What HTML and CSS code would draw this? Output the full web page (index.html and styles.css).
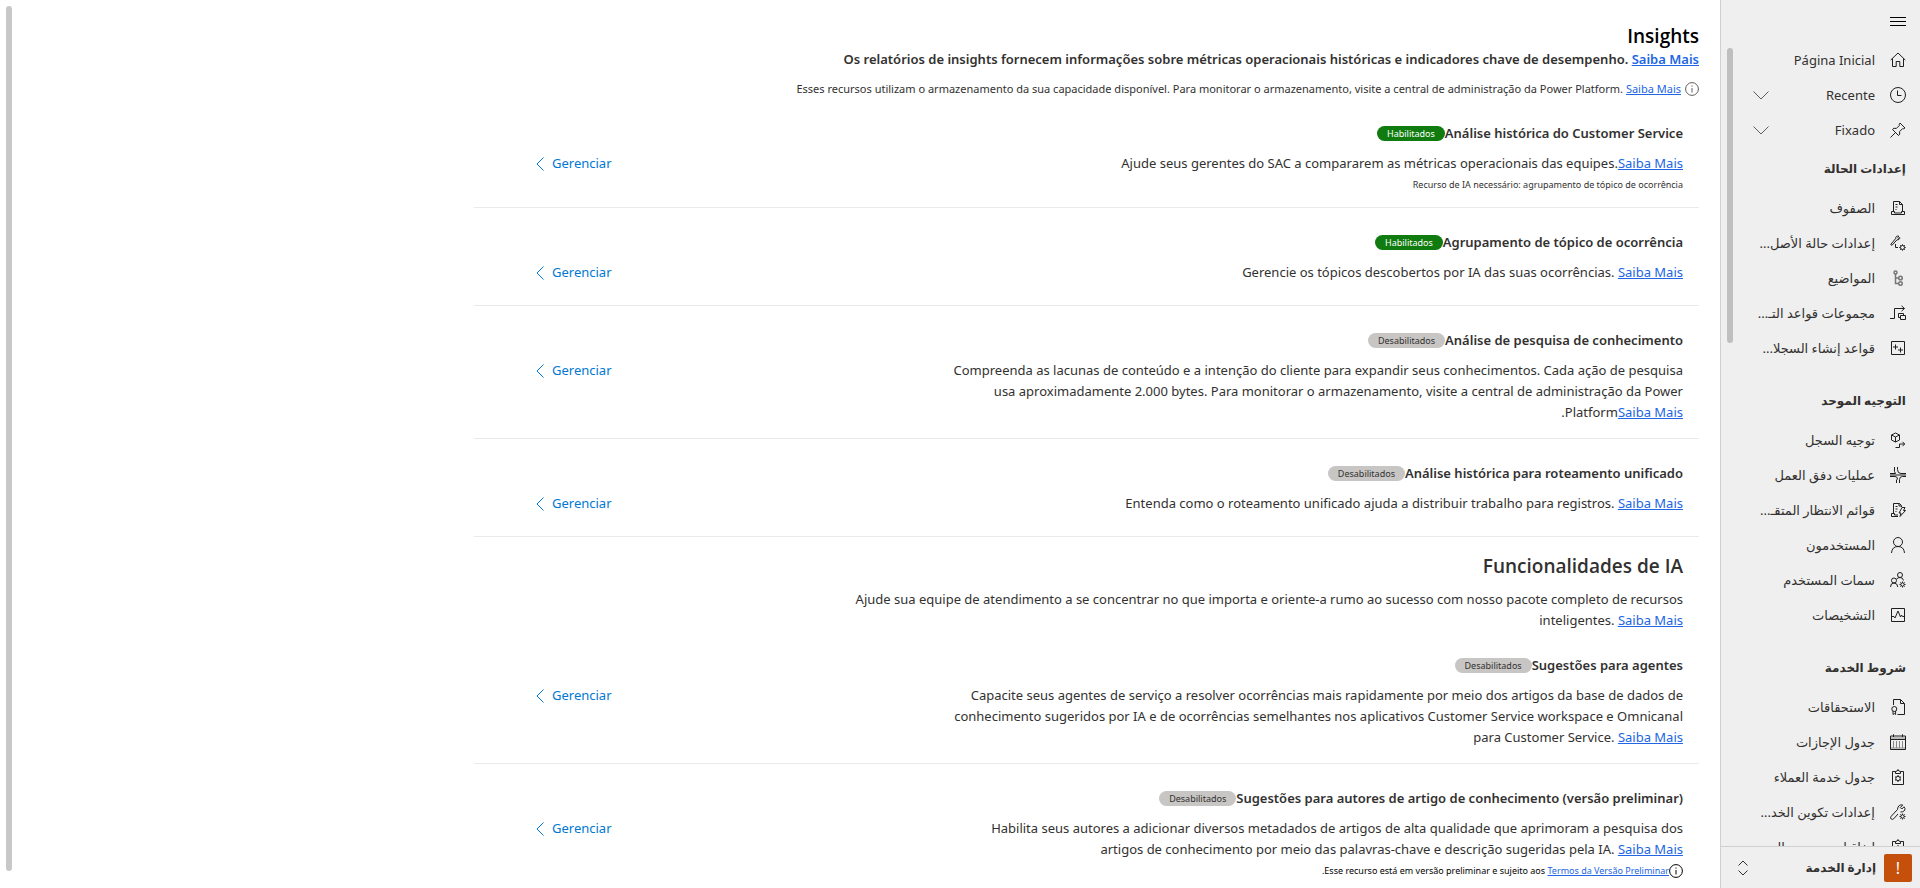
FILE: index.html
```html
<!DOCTYPE html>
<html lang="pt-BR" dir="rtl">
<head>
<meta charset="utf-8">
<title>Insights</title>
<link rel="stylesheet" href="styles.css">
</head>
<body>
<svg class="sprite" aria-hidden="true">
  <symbol id="i-home" viewBox="0 0 16 16"><path d="M.7 8 8 1l7.300 7M2.500 6.500v8h3.700v-5h3.600v5h3.700v-8"/></symbol>
  <symbol id="i-clock" viewBox="0 0 16 16"><circle cx="8" cy="8" r="7.500"/><path d="M7.500 3.500v5h4"/></symbol>
  <symbol id="i-pin" viewBox="0 0 16 16"><path d="m10 1 5 5-1.500.8-.8-.3L9.500 9.700l.3 2.300-1.300 1.500-6-6L4 6.200l2.300.3L9.500 3.300 9.200 2.500zM5.500 10.500.5 15.500"/></symbol>
  <symbol id="i-queue" viewBox="0 0 16 16"><path d="M3.500 11V1.500h6l3 3V11M9.500 1.500v3h3M1.500 11.500h3v1.500h7v-1.500h3v3h-13zM5.500 4.500h2M5.500 7h2M5.500 9.500h1"/></symbol>
  <symbol id="i-casecfg" viewBox="0 0 16 16"><path d="m.7 9.500 5-6C5.500 1.500 7 .5 9 1.300L7.700 2.600 8.500 3.500l1.200-1C10.200 4 8.500 5 7 4.800L2 10.300zM5.500 9v3.500H8"/><circle cx="12.500" cy="12.500" r="2"/><path d="M12.500 9.300v1.200M12.500 14.500v1.200M9.300 12.500h1.200M14.500 12.500h1.200M10.200 10.200l.9.9M13.900 13.900l.9.9M14.800 10.200l-.9.9M11.100 13.900l-.9.9"/></symbol>
  <symbol id="i-tree" viewBox="0 0 16 16"><g stroke="#777" stroke-width="1.500"><circle cx="5.500" cy="2.500" r="1.500"/><circle cx="10.500" cy="8" r="1.800"/><circle cx="10.500" cy="13.500" r="1.800"/><path d="M5.500 4v9.500h3M5.500 8h3"/></g></symbol>
  <symbol id="i-rules" viewBox="0 0 16 16"><path d="M0 13.500h4.500v-10h10M11.500.8l3 2.700-3 2.700M10.500 10.500h5v4h-5zM10.500 12.500h-2v-4h5v2"/></symbol>
  <symbol id="i-records" viewBox="0 0 16 16"><path d="M1.500 1.500h13v13h-13zM5.500 4.500v5M3 7h5M10.500 7.500v5M8 10h5"/></symbol>
  <symbol id="i-routing" viewBox="0 0 16 16"><path d="m5.500 1 4 2v5l-4 2-4-2V3zM1.500 3l4 2 4-2M5.500 5v5M5.500 15.500h4v-3.500h5M12.500 9.800l2.200 2.200-2.200 2.200"/></symbol>
  <symbol id="i-flows" viewBox="0 0 16 16"><path d="M0 6.500h5.500l-1-2V0M0 9.500h5q2.500 0 2.500 2.500l-1 1v3M7.500 0v2.500q0 4 3.500 4h5M9.500 16v-3.500q0-3 3-3H16M0 8h16"/></symbol>
  <symbol id="i-overflow" viewBox="0 0 16 16"><path d="M3.500 11V1.500h6l2 2V5M9 1.500V4h2.500M1.500 11.500h3v1.500H8M1.500 11.500v3H8M5.500 4.500h2M5.500 7h2M5.500 9.500h1M12 5.500h3l-1.500 3h2L10 14.500l1-3.500H9z"/></symbol>
  <symbol id="i-user" viewBox="0 0 16 16"><circle cx="8" cy="5" r="4.500"/><path d="M1.500 16q.5-6.500 6.500-6.500T14.500 16"/></symbol>
  <symbol id="i-attrs" viewBox="0 0 16 16"><circle cx="10" cy="3" r="2.500"/><circle cx="4" cy="8.500" r="2.500"/><path d="M.5 15q0-4 3.500-4t3.800 4M6.500 7q1.500-1.500 3.500-1.500 3 0 3.500 3"/><circle cx="12.500" cy="12.500" r="1.700"/><path d="M12.500 9.500v1.300M12.500 14.200v1.300M9.500 12.500h1.300M14.200 12.500h1.300M10.400 10.400l.9.900M13.700 13.700l.9.900M14.600 10.400l-.9.900M11.300 13.700l-.9.900"/></symbol>
  <symbol id="i-pulse" viewBox="0 0 16 16"><path d="M1.500 1.500h13v13h-13zM1.500 9.500H4l1 1.500 3-7 2.500 6 1-2 1 1.500h2"/></symbol>
  <symbol id="i-entitle" viewBox="0 0 16 16"><path d="M3.500 6V.5h7l4 4v11H7.500M10.500.5v4h4"/><circle cx="4.300" cy="10" r="2.500"/><path d="M3 12v3.500l1.300-1 1.300 1V12"/></symbol>
  <symbol id="i-calendar" viewBox="0 0 16 16"><path stroke="#888" d="M.5 4h15M.5 14h15M3.500 7v7M6.500 7v7M9.500 7v7M12.500 7v7"/><path d="M.5 2h15v13.500H.5zM.5 5.500h15M3.500.3V3M12.500.3V3"/></symbol>
  <symbol id="i-clip" viewBox="0 0 16 16"><path d="M5.500 2.500H2.500v13h11v-13h-3M5.500 4.500v-2q2 0 2.500-2 .5 2 2.500 2v2z"/><circle cx="8" cy="9.500" r="2.200"/><path d="M8 6v1.300M8 11.700V13M5 7.700l1.100.7M9.900 10.600l1.100.7M11 7.700l-1.100.7M6.100 10.600l-1.100.7"/></symbol>
  <symbol id="i-wrench" viewBox="0 0 16 16"><path d="M15 4.500q0 3.500-4.500 3.500M15 4.500 14 2.800 11.800 5 10.300 3.500 12.800 1Q8 0 7.500 5.500l-6.500 7q-1 1.500.2 2.500t2.600-.3L8 10"/><circle cx="12.500" cy="12.500" r="1.700"/><path d="M12.500 9.500v1.300M12.500 14.200v1.300M9.500 12.500h1.300M14.200 12.500h1.300M10.400 10.400l.9.900M13.700 13.700l.9.900M14.600 10.400l-.9.900M11.300 13.700l-.9.900"/></symbol>
  <symbol id="i-down" viewBox="0 0 16 16"><path d="m.5 4.500 7.500 7.500 7.500-7.500"/></symbol>
  <symbol id="i-left" viewBox="0 0 8 14"><path d="M7.500.5 1 7l6.500 6.500"/></symbol>
  <symbol id="i-info" viewBox="0 0 14 14"><circle cx="7" cy="7" r="6.400"/><path d="M7 6v4.500M7 3.500v1.200"/></symbol>
</svg>
<div class="app">
  <aside class="sidebar">
    <button class="menu" type="button" aria-label="Menu"><svg viewBox="0 0 16 9"><path d="M0 .5h16M0 4.500h16M0 8.500h16"/></svg></button>
    <nav class="nav">
      <a class="item" href="#"><svg><use href="#i-home"/></svg><span>Página Inicial</span></a>
      <button class="item" type="button"><svg><use href="#i-clock"/></svg><span>Recente</span><svg class="chev"><use href="#i-down"/></svg></button>
      <button class="item" type="button"><svg><use href="#i-pin"/></svg><span>Fixado</span><svg class="chev"><use href="#i-down"/></svg></button>
      <h2 class="group first">إعدادات الحالة</h2>
      <a class="item" href="#"><svg><use href="#i-queue"/></svg><span>الصفوف</span></a>
      <a class="item" href="#"><svg><use href="#i-casecfg"/></svg><span>إعدادات حالة الأصل...</span></a>
      <a class="item" href="#"><svg><use href="#i-tree"/></svg><span>المواضيع</span></a>
      <a class="item" href="#"><svg><use href="#i-rules"/></svg><span>مجموعات قواعد التـ...</span></a>
      <a class="item" href="#"><svg><use href="#i-records"/></svg><span>قواعد إنشاء السجلا...</span></a>
      <h2 class="group">التوجيه الموحد</h2>
      <a class="item" href="#"><svg><use href="#i-routing"/></svg><span>توجيه السجل</span></a>
      <a class="item" href="#"><svg><use href="#i-flows"/></svg><span>عمليات دفق العمل</span></a>
      <a class="item" href="#"><svg><use href="#i-overflow"/></svg><span>قوائم الانتظار المتقـ...</span></a>
      <a class="item" href="#"><svg><use href="#i-user"/></svg><span>المستخدمون</span></a>
      <a class="item" href="#"><svg><use href="#i-attrs"/></svg><span>سمات المستخدم</span></a>
      <a class="item" href="#"><svg><use href="#i-pulse"/></svg><span>التشخيصات</span></a>
      <h2 class="group">شروط الخدمة</h2>
      <a class="item" href="#"><svg><use href="#i-entitle"/></svg><span>الاستحقاقات</span></a>
      <a class="item" href="#"><svg><use href="#i-calendar"/></svg><span>جدول الإجازات</span></a>
      <a class="item" href="#"><svg><use href="#i-clip"/></svg><span>جدول خدمة العملاء</span></a>
      <a class="item" href="#"><svg><use href="#i-wrench"/></svg><span>إعدادات تكوين الخد...</span></a>
      <a class="item" href="#"><svg><use href="#i-clip"/></svg><span>اتفاقيات مستوى ال...</span></a>
      <div class="thumb nav-thumb"></div>
    </nav>
    <button class="area" type="button">
      <span class="area-badge">!</span><span class="area-name">إدارة الخدمة</span>
      <svg class="updown" viewBox="0 0 10 16"><path d="M.5 5.500 5 1l4.500 4.500M.5 10.500 5 15l4.500-4.500"/></svg>
    </button>
  </aside>
  <main class="main">
    <div class="thumb main-thumb"></div>
    <div class="content">
      <h1 class="title">Insights</h1>
      <p class="subtitle">Os relatórios de insights fornecem informações sobre métricas operacionais históricas e indicadores chave de desempenho. <a href="#">Saiba Mais</a></p>
      <p class="note"><svg class="info"><use href="#i-info"/></svg><span>Esses recursos utilizam o armazenamento da sua capacidade disponível. Para monitorar o armazenamento, visite a central de administração da Power Platform. <a href="#">Saiba Mais</a></span></p>

      <section class="card">
        <h3 class="name"><bdi>Análise histórica do Customer Service</bdi><span class="badge on">Habilitados</span></h3>
        <div class="row"><p class="desc">Ajude seus gerentes do SAC a compararem as métricas operacionais das equipes.<a href="#">Saiba Mais</a></p>
        <a class="manage" href="#"><span>Gerenciar</span><svg><use href="#i-left"/></svg></a></div>
        <p class="fine">Recurso de IA necessário: agrupamento de tópico de ocorrência</p>
      </section>
      <section class="card">
        <h3 class="name"><bdi>Agrupamento de tópico de ocorrência</bdi><span class="badge on">Habilitados</span></h3>
        <div class="row"><p class="desc">Gerencie os tópicos descobertos por IA das suas ocorrências. <a href="#">Saiba Mais</a></p>
        <a class="manage" href="#"><span>Gerenciar</span><svg><use href="#i-left"/></svg></a></div>
      </section>
      <section class="card">
        <h3 class="name"><bdi>Análise de pesquisa de conhecimento</bdi><span class="badge">Desabilitados</span></h3>
        <div class="row"><p class="desc">Compreenda as lacunas de conteúdo e a intenção do cliente para expandir seus conhecimentos. Cada ação de pesquisa usa aproximadamente 2.000 bytes. Para monitorar o armazenamento, visite a central de administração da Power Platform<a href="#">Saiba Mais</a>.</p>
        <a class="manage" href="#"><span>Gerenciar</span><svg><use href="#i-left"/></svg></a></div>
      </section>
      <section class="card">
        <h3 class="name"><bdi>Análise histórica para roteamento unificado</bdi><span class="badge">Desabilitados</span></h3>
        <div class="row"><p class="desc">Entenda como o roteamento unificado ajuda a distribuir trabalho para registros. <a href="#">Saiba Mais</a></p>
        <a class="manage" href="#"><span>Gerenciar</span><svg><use href="#i-left"/></svg></a></div>
      </section>

      <header class="section-head">
        <h2 class="section-title">Funcionalidades de IA</h2>
        <p class="section-desc">Ajude sua equipe de atendimento a se concentrar no que importa e oriente-a rumo ao sucesso com nosso pacote completo de recursos inteligentes. <a href="#">Saiba Mais</a></p>
      </header>

      <section class="card">
        <h3 class="name"><bdi>Sugestões para agentes</bdi><span class="badge">Desabilitados</span></h3>
        <div class="row"><p class="desc">Capacite seus agentes de serviço a resolver ocorrências mais rapidamente por meio dos artigos da base de dados de conhecimento sugeridos por IA e de ocorrências semelhantes nos aplicativos Customer Service workspace e Omnicanal para Customer Service. <a href="#">Saiba Mais</a></p>
        <a class="manage" href="#"><span>Gerenciar</span><svg><use href="#i-left"/></svg></a></div>
      </section>
      <section class="card">
        <h3 class="name"><bdi>Sugestões para autores de artigo de conhecimento (versão preliminar)</bdi><span class="badge">Desabilitados</span></h3>
        <div class="row"><p class="desc">Habilita seus autores a adicionar diversos metadados de artigos de alta qualidade que aprimoram a pesquisa dos artigos de conhecimento por meio das palavras-chave e descrição sugeridas pela IA. <a href="#">Saiba Mais</a></p>
        <a class="manage" href="#"><span>Gerenciar</span><svg><use href="#i-left"/></svg></a></div>
        <p class="fine preview"><svg class="info"><use href="#i-info"/></svg><span>Esse recurso está em versão preliminar e sujeito aos <a href="#">Termos da Versão Preliminar</a>.</span></p>
      </section>
    </div>
  </main>
</div>
</body>
</html>
```
FILE: styles.css
```css
* { box-sizing: border-box; }
body, h1, h2, h3, p { margin: 0; }
body {
  font-family: "Noto Sans", "Open Sans", "DejaVu Sans", sans-serif;
  font-size: 13px;
  line-height: 21px;
  color: #323130;
  background: #fff;
}
svg { fill: none; stroke: currentColor; stroke-width: 1; flex: none; }
button { font: inherit; color: inherit; background: none; border: 0; padding: 0; text-align: start; cursor: pointer; }
a { color: #2266e3; }
.sprite { position: absolute; width: 0; height: 0; }

.app { display: flex; height: 100vh; overflow: hidden; }

.sidebar {
  display: flex;
  flex-direction: column;
  width: 200px;
  flex: none;
  background: #efefef;
  border-left: 1px solid #d2d0ce;
}
.menu { height: 42px; padding: 0 14px; color: #000; flex: none; }
.menu svg { display: block; width: 16px; height: 9px; }
.nav { position: relative; flex: 1; min-height: 0; overflow: hidden; }
.item {
  display: flex;
  align-items: center;
  gap: 15px;
  width: 100%;
  height: 35px;
  padding: 0 14px;
  color: #323130;
  text-decoration: none;
  white-space: nowrap;
}
.item span { padding-top: 2px; }
.item svg { width: 16px; height: 16px; color: #201f1e; }
.item .chev { margin-right: auto; margin-left: 18px; color: #605e5c; }
.group { height: 57px; padding: 14px 14px 0; font-size: 12px; line-height: 44px; font-weight: 600; }
.group.first { height: 43px; padding-top: 0; }
.thumb { position: absolute; width: 6px; border-radius: 3px; background: #bfbfbf; }
.nav-thumb { left: 6px; top: 6px; height: 295px; }
.area {
  display: flex;
  align-items: center;
  gap: 8px;
  height: 42px;
  padding: 0 8px;
  border-top: 1px solid #d2d0ce;
  flex: none;
}
.area-badge {
  width: 28px;
  height: 28px;
  border-radius: 2px;
  background: #c4500c;
  color: #fff;
  font-size: 16px;
  line-height: 28px;
  text-align: center;
}
.area-name { font-size: 12px; font-weight: 600; }
.updown { width: 10px; height: 16px; margin-right: auto; margin-left: 9px; }

.main { position: relative; flex: 1; min-width: 0; overflow: hidden; padding: 24px 21px 0 0; }
.main-thumb { left: 6px; top: 6px; bottom: 17px; background: #c8c8c8; }
.content { max-width: 1225px; }
.title, .section-title { font-family: "Open Sans", "Noto Sans", sans-serif; font-size: 19px; font-weight: 600; }
.title { line-height: 25px; color: #000; }
.subtitle { font-weight: 600; }
.note { display: flex; align-items: center; gap: 4px; margin-top: 8px; font-size: 11px; line-height: 21px; }
.note .info { width: 14px; height: 14px; color: #605e5c; }

.card { min-height: 98px; padding: 23px 16px 15px; border-bottom: 1px solid #eaeaea; }
.name { display: flex; align-items: center; margin-bottom: 9px; font-size: 13px; line-height: 22px; font-weight: 600; }
.badge {
  padding: 0 10px;
  border-radius: 8px;
  background: #c8c6c4;
  font-size: 9px;
  line-height: 15px;
  font-weight: 400;
}
.badge.on { background: #107c10; color: #fff; }
.row { display: flex; align-items: flex-start; justify-content: space-between; }
.desc { width: 735px; }
.manage { display: flex; align-items: center; gap: 8px; margin-left: 46px; color: #0078d4; text-decoration: none; }
.manage svg { width: 8px; height: 14px; }
.fine { font-size: 9px; line-height: 14px; margin-top: 4px; }
.preview { display: flex; align-items: center; color: #000; }
.preview .info { width: 14px; height: 14px; }
.section-head { padding: 15px 16px 0; }
.section-title { line-height: 28px; }
.section-desc { width: 860px; margin-top: 9px; }
```
